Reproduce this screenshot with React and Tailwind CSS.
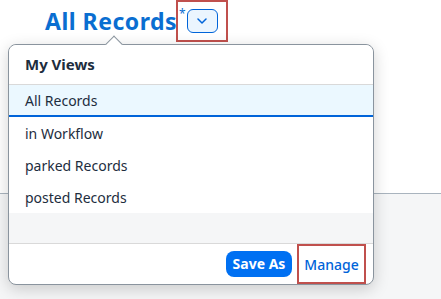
export default function App() {
  const font = { fontFamily: '"Noto Sans", Inter, sans-serif' };
  return (
    <div className="relative w-[441px] h-[299px] overflow-hidden bg-[#f5f6f7]" style={font}>
      <div className="h-[194px] bg-white border-b border-[#a9b4be]">
        <div className="flex items-start pl-[45px] pt-[4px]">
          <span className="text-[23px] font-bold text-[#0a6ed1] leading-[34px] tracking-[0.5px]">All Records</span>
          <div className="relative ml-[-1px] mt-[-4px] w-[52px] h-[42px] border-2 border-[#c0504d] flex items-center justify-center">
            <span className="absolute left-[1px] top-[6px] text-[12px] text-[#0a6ed1] leading-none">*</span>
            <div className="w-[31px] h-[24px] rounded-[6px] border border-[#0064d9] bg-[#ebf5fe] flex items-center justify-center">
              <svg width="10" height="6" viewBox="0 0 10 6" fill="none">
                <path d="M1 1l4 4 4-4" stroke="#0064d9" strokeWidth="1.5" strokeLinecap="round" strokeLinejoin="round" />
              </svg>
            </div>
          </div>
        </div>
      </div>

      <div className="absolute left-[8px] top-[44px] w-[366px] h-[241px] rounded-[8px] border border-[#8a949e] bg-white shadow-[0_4px_16px_rgba(0,0,0,0.18)] flex flex-col">
        <div className="absolute left-[99px] top-[-7px] w-[12px] h-[12px] rotate-45 bg-white border-l border-t border-[#8a949e]" />
        <div className="relative h-[40px] flex items-center pl-[16px] border-b border-[#d9d9d9] rounded-t-[8px] bg-white">
          <span className="text-[15px] font-bold text-[#1d2d3e]">My Views</span>
        </div>
        <div className="h-[32px] flex items-center pl-[16px] bg-[#ebf8ff] border-b-2 border-[#0064d9] text-[14px] text-[#1d2d3e]">All Records</div>
        <div className="h-[32px] flex items-center pl-[16px] text-[14px] text-[#1d2d3e]">in Workflow</div>
        <div className="h-[32px] flex items-center pl-[16px] text-[14px] text-[#1d2d3e]">parked Records</div>
        <div className="h-[32px] flex items-center pl-[16px] text-[14px] text-[#1d2d3e]">posted Records</div>
        <div className="flex-1 bg-[#f5f6f7] border-b border-[#d9d9d9]" />
        <div className="h-[40px] flex items-center justify-end pr-[7px]">
          <button className="h-[26px] w-[66px] rounded-[8px] bg-[#0070f2] text-white text-[14px] font-bold leading-none">Save As</button>
          <div className="ml-[5px] h-[40px] w-[69px] border-2 border-[#c0504d] flex items-center justify-center text-[14px] text-[#0064d9] font-medium">Manage</div>
        </div>
      </div>
    </div>
  );
}
